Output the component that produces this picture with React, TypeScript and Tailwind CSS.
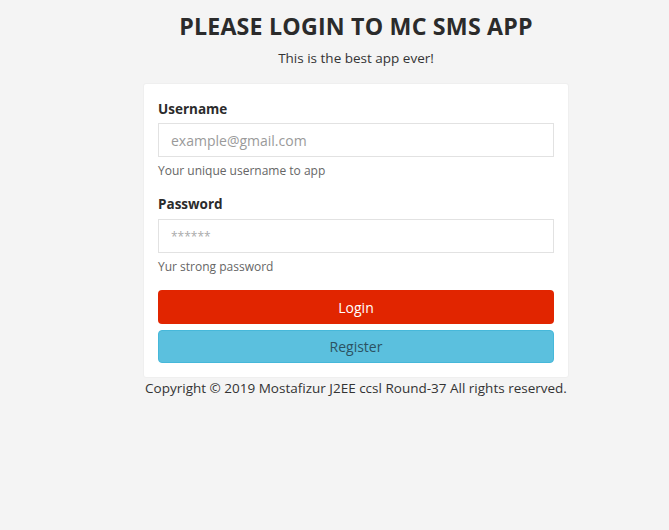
import React from "react";

export default function App() {
  const font = { fontFamily: '"Open Sans", "Noto Sans", sans-serif' };
  return (
    <div className="min-h-[530px] w-full bg-[#f4f4f4] text-[#333]" style={font}>
      <div className="ml-[143px] w-[426px] flex flex-col items-center">
        <h1 className="mt-[10px] h-[32px] text-[23.2px] font-bold leading-[32px] tracking-[0.2px] text-[#2b2b2b] whitespace-nowrap">
          PLEASE LOGIN TO MC SMS APP
        </h1>
        <p className="mt-[6px] h-[20px] text-[13.5px] leading-[20px] text-[#333]">This is the best app ever!</p>
        <div className="mt-[15px] w-full bg-white rounded-[3px] border border-[#efefef] px-[14px] pt-[15px] pb-[14px]">
          <label className="block text-[13.5px] font-bold leading-[20px] text-[#2b2b2b]">Username</label>
          <input
            className="mt-[4px] block w-full h-[34px] border border-[#e2e2e2] px-[12px] text-[14px] text-[#555] outline-none placeholder:text-[#9a9a9a]"
            placeholder="example@gmail.com"
            style={font}
          />
          <div className="mt-[5px] text-[12px] leading-[17px] text-[#666]">Your unique username to app</div>
          <label className="mt-[15px] block text-[13.5px] font-bold leading-[20px] text-[#2b2b2b]">Password</label>
          <input
            className="mt-[5px] block w-full h-[34px] border border-[#e2e2e2] px-[12px] text-[12px] text-[#555] outline-none placeholder:text-[#aaa]"
            placeholder="******"
            style={font}
          />
          <div className="mt-[5px] text-[12px] leading-[17px] text-[#666]">Yur strong password</div>
          <button className="mt-[15px] block w-full h-[34px] rounded-[4px] bg-[#e12500] text-[14px] text-white" style={font}>
            Login
          </button>
          <button className="mt-[6px] block w-full h-[33px] rounded-[4px] bg-[#5bc0de] border border-[#46b8da] text-[14px] text-[#2c5262]" style={font}>
            Register
          </button>
        </div>
        <div className="mt-[0px] text-[13.5px] leading-[20px] text-[#333] whitespace-nowrap">
          Copyright © 2019 Mostafizur J2EE ccsl Round-37 All rights reserved.
        </div>
      </div>
    </div>
  );
}
